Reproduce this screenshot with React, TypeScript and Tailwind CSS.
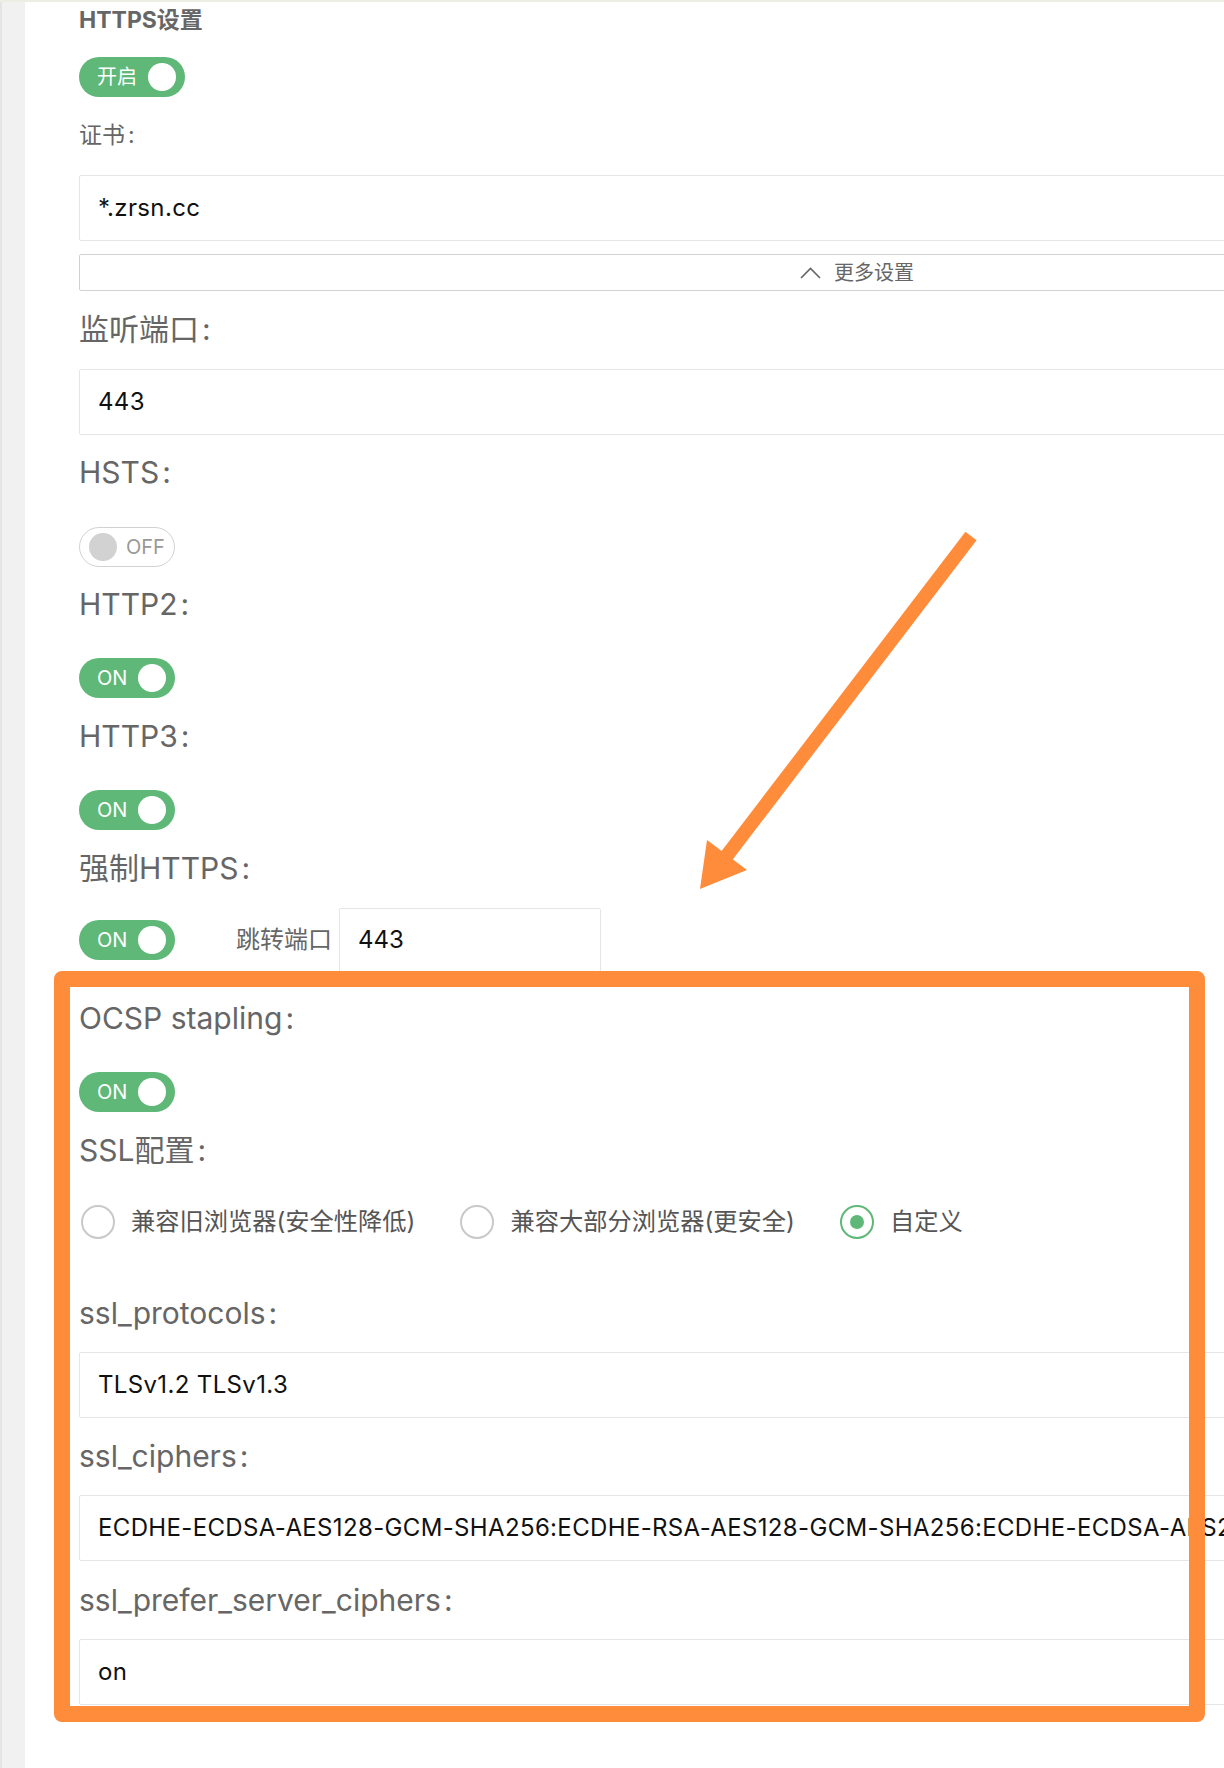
import type { ReactNode } from "react";

function Label({ children, className = "" }: { children: ReactNode; className?: string }) {
  return (
    <div className={`h-[40px] leading-[40px] text-[30px] text-[#666] ${className}`}>
      {children}
      <span className="ml-[3px]">:</span>
    </div>
  );
}

function Field({ value, className = "" }: { value: string; className?: string }) {
  return (
    <div className={`flex h-[66px] items-center overflow-hidden whitespace-nowrap rounded-[2px] border border-[#e6e6e6] bg-white pl-[18px] text-[24px] tracking-[0.35px] text-[#111] ${className}`}>
      {value}
    </div>
  );
}

function SwitchOn({ text = "ON", className = "" }: { text?: string; className?: string }) {
  return (
    <div className={`flex h-[40px] w-[96px] shrink-0 items-center justify-between rounded-full bg-[#5fb878] pl-[18px] pr-[9px] ${className}`}>
      <span className="text-[20px] leading-none text-white">{text}</span>
      <span className="h-[28px] w-[28px] rounded-full bg-white" />
    </div>
  );
}

function SwitchOff({ className = "" }: { className?: string }) {
  return (
    <div className={`flex h-[40px] w-[96px] items-center gap-[9px] rounded-full border border-[#d2d2d2] bg-white pl-[9px] ${className}`}>
      <span className="h-[28px] w-[28px] rounded-full bg-[#d2d2d2]" />
      <span className="text-[20px] leading-none text-[#999]">OFF</span>
    </div>
  );
}

function Radio({ label, checked = false, className = "" }: { label: string; checked?: boolean; className?: string }) {
  return (
    <div className={`flex items-center ${className}`}>
      <span
        className={`flex h-[34px] w-[34px] items-center justify-center rounded-full border-2 ${checked ? "border-[#5fb878]" : "border-[#c9c9c9]"}`}
      >
        {checked && <span className="h-[14px] w-[14px] rounded-full bg-[#5fb878]" />}
      </span>
      <span className="ml-[16px] text-[24.25px] text-[#555]">{label}</span>
    </div>
  );
}

export default function App() {
  return (
    <div className="relative flex h-[1768px] w-[1224px] overflow-hidden border-t-2 border-[#eeede3] bg-white font-[Inter,'Noto_Sans_CJK_SC',sans-serif]">
      <div className="w-[25px] shrink-0 border-l-2 border-[#e4e4e4] bg-[#f1f1f1]" />
      <div className="ml-[54px] flex w-[1556px] shrink-0 flex-col pt-[3px]">
        <div className="h-[30px] text-[23px] font-bold leading-[30px] text-[#666]">HTTPS设置</div>
        <SwitchOn text="开启" className="mt-[22px] w-[106px]" />
        <div className="mt-[23px] h-[30px] text-[23px] leading-[30px] text-[#666]">
          证书<span className="ml-[3px]">:</span>
        </div>
        <Field value="*.zrsn.cc" className="mt-[25px] h-[65px]" />
        <div className="mt-[13px] flex h-[37px] items-center justify-center gap-[13px] rounded-[2px] border border-[#d2d2d2] text-[20px] text-[#666]">
          <svg width="21" height="12" viewBox="0 0 21 12" fill="none" stroke="#666" strokeWidth="1.6">
            <path d="M1 11 L10.5 1.5 L20 11" />
          </svg>
          <span>更多设置</span>
        </div>

        <Label className="mt-[18px]">监听端口</Label>
        <Field value="443" className="mt-[20px]" />

        <Label className="mt-[17px]">HSTS</Label>
        <SwitchOff className="mt-[35px]" />

        <Label className="mt-[17px]">HTTP2</Label>
        <SwitchOn className="mt-[34px]" />

        <Label className="mt-[18px]">HTTP3</Label>
        <SwitchOn className="mt-[34px]" />

        <Label className="mt-[18px]">强制HTTPS</Label>
        <div className="mt-[20px] flex h-[64px] items-center">
          <SwitchOn />
          <span className="ml-[61px] text-[24px] text-[#666]">跳转端口</span>
          <div className="ml-[7px] flex h-[64px] w-[262px] items-center rounded-[2px] border border-[#e6e6e6] pl-[18px] text-[24px] text-[#111]">
            443
          </div>
        </div>

        <Label className="mt-[26px]">OCSP stapling</Label>
        <SwitchOn className="mt-[34px]" />

        <Label className="mt-[18px]">SSL配置</Label>
        <div className="mt-[32px] flex h-[40px] items-center pl-[2px]">
          <Radio label="兼容旧浏览器(安全性降低)" />
          <Radio label="兼容大部分浏览器(更安全)" className="ml-[45px]" />
          <Radio label="自定义" checked className="ml-[45px]" />
        </div>

        <Label className="mt-[51px]">ssl_protocols</Label>
        <Field value="TLSv1.2 TLSv1.3" className="mt-[19px]" />

        <Label className="mt-[18px]">ssl_ciphers</Label>
        <Field
          value="ECDHE-ECDSA-AES128-GCM-SHA256:ECDHE-RSA-AES128-GCM-SHA256:ECDHE-ECDSA-AES256-GCM-SHA384:ECDHE-RSA-AES256-GCM-SHA384"
          className="mt-[19px]"
        />

        <Label className="mt-[19px]">ssl_prefer_server_ciphers</Label>
        <Field value="on" className="mt-[19px]" />
      </div>

      {/* highlight box */}
      <div className="pointer-events-none absolute left-[54px] top-[969px] h-[751px] w-[1151px] rounded-[8px] border-[16px] border-[#fe8c3b]" />

      {/* arrow */}
      <svg className="pointer-events-none absolute left-0 top-0" width="1224" height="1768">
        <line x1="971" y1="534" x2="722" y2="860" stroke="#fe8c3b" strokeWidth="14" />
        <polygon points="700,887 707,838 747,868" fill="#fe8c3b" />
      </svg>
    </div>
  );
}
